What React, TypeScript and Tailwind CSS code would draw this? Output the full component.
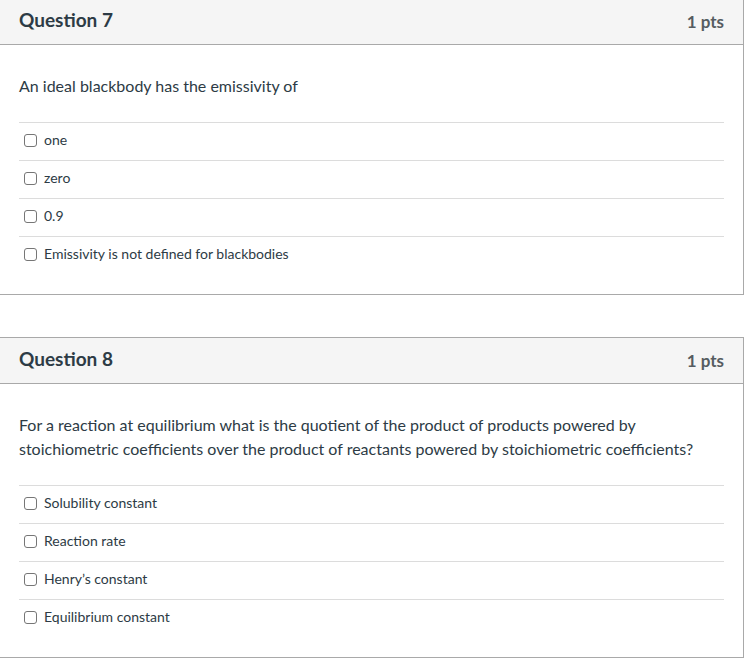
import React from 'react';

type Question = {
  title: string;
  points: string;
  text: string;
  answers: string[];
};

const questions: Question[] = [
  {
    title: 'Question 7',
    points: '1 pts',
    text: 'An ideal blackbody has the emissivity of',
    answers: ['one', 'zero', '0.9', 'Emissivity is not defined for blackbodies'],
  },
  {
    title: 'Question 8',
    points: '1 pts',
    text:
      'For a reaction at equilibrium what is the quotient of the product of products powered by stoichiometric coefficients over the product of reactants powered by stoichiometric coefficients?',
    answers: ['Solubility constant', 'Reaction rate', 'Henry\u2019s constant', 'Equilibrium constant'],
  },
];

const QuestionCard: React.FC<{ q: Question }> = ({ q }) => (
  <div className="w-[745px] -ml-px border border-[#a9a9a9] bg-white">
    <div className="h-[46px] flex items-center justify-between px-[19px] pb-[3px] bg-[#f5f5f5] border-b border-[#a9a9a9]">
      <h2 className="text-[19px] font-bold text-[#2d3b45]">{q.title}</h2>
      <span className="text-[17px] font-bold text-[#555c61] mt-[3px]">{q.points}</span>
    </div>
    <div className="px-[19px] pt-[29px] pb-[20px]">
      <p className="text-[16px] leading-[24px] text-[#2d3b45] pr-6">{q.text}</p>
      <div className="mt-[24px]">
        {q.answers.map((a) => (
          <label key={a} className="flex items-center h-[38px] border-t border-[#dcdcdc] pl-[5px] pb-[4px]">
            <span className="w-[13px] h-[13px] rounded-[3px] border border-[#767676] bg-white shrink-0 mt-[2px]" />
            <span className="ml-[7px] text-[14px] text-[#2d3b45]">{a}</span>
          </label>
        ))}
      </div>
    </div>
  </div>
);

export default function App() {
  return (
    <div className="min-h-screen bg-white -mt-[2px] overflow-hidden" style={{ fontFamily: 'Lato, "Open Sans", sans-serif' }}>
      <div className="flex flex-col gap-[42px]">
        {questions.map((q) => (
          <QuestionCard key={q.title} q={q} />
        ))}
      </div>
    </div>
  );
}
